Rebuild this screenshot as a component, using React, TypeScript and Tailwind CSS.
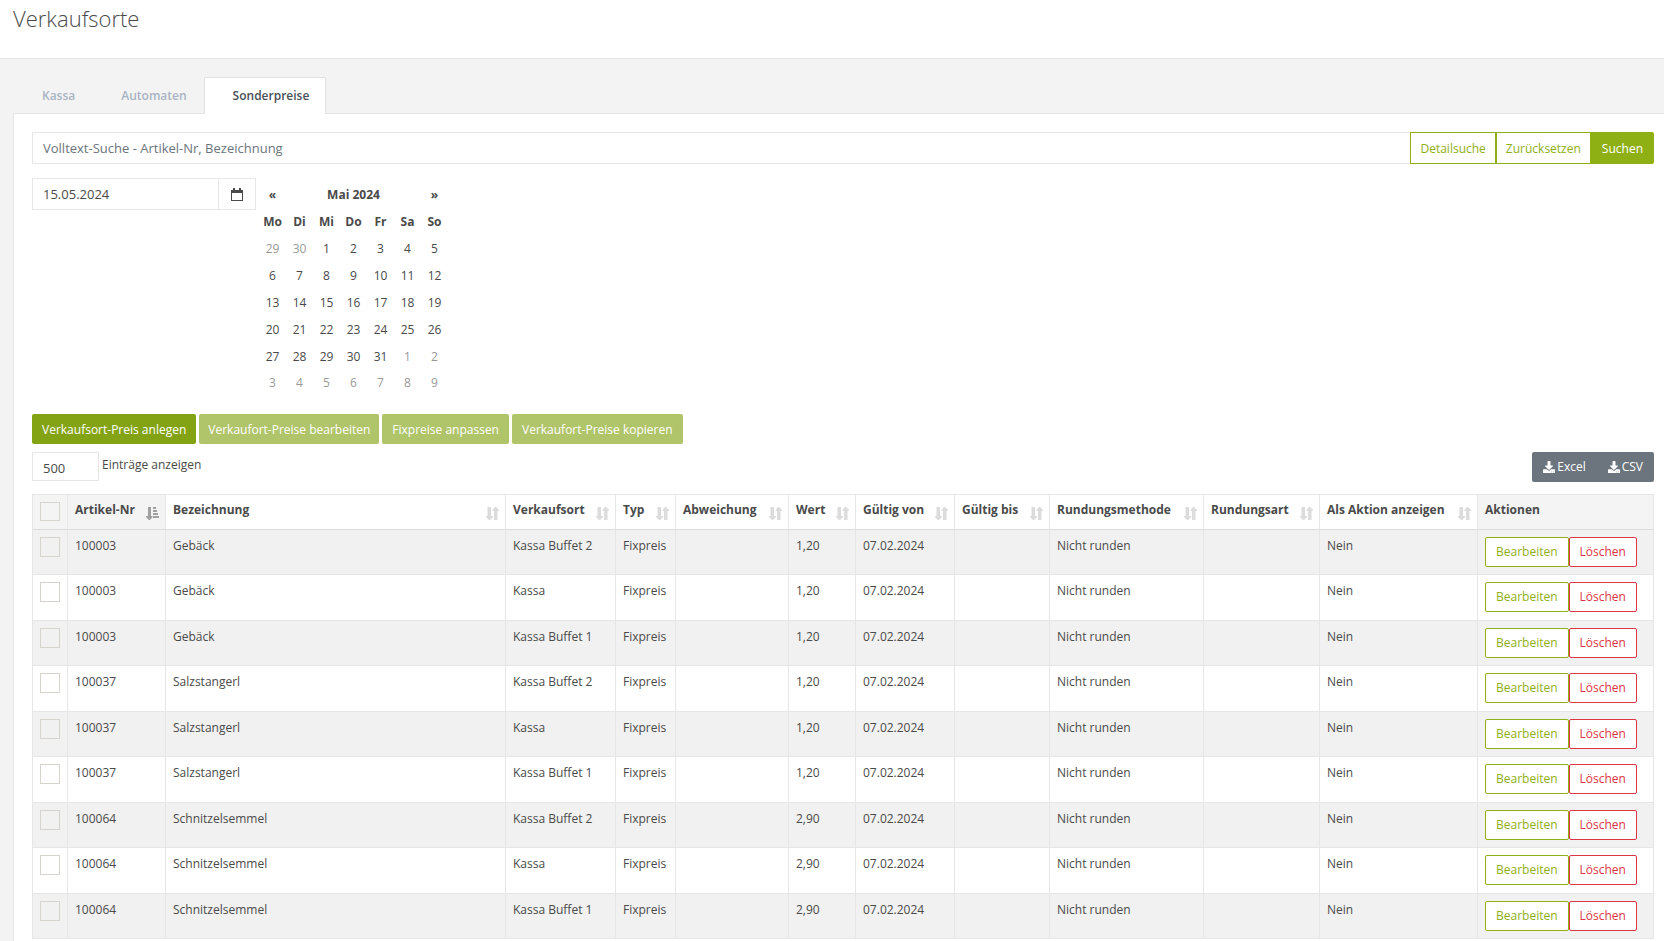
import React from 'react';
import { FaDownload } from 'react-icons/fa';

const weekDays = ['Mo', 'Di', 'Mi', 'Do', 'Fr', 'Sa', 'So'];

// 29 April 2024 is the first visible day
const weeks = [
  [29, 30, 1, 2, 3, 4, 5],
  [6, 7, 8, 9, 10, 11, 12],
  [13, 14, 15, 16, 17, 18, 19],
  [20, 21, 22, 23, 24, 25, 26],
  [27, 28, 29, 30, 31, 1, 2],
  [3, 4, 5, 6, 7, 8, 9],
];

const isOtherMonth = (week: number, day: number) =>
  (week === 0 && day > 20) || (week === 4 && day < 10) || week === 5;

const columns = [
  { label: 'Bezeichnung', width: '' },
  { label: 'Verkaufsort', width: 'w-[110px]' },
  { label: 'Typ', width: 'w-[60px]' },
  { label: 'Abweichung', width: 'w-[113px]' },
  { label: 'Wert', width: 'w-[67px]' },
  { label: 'Gültig von', width: 'w-[99px]' },
  { label: 'Gültig bis', width: 'w-[95px]' },
  { label: 'Rundungsmethode', width: 'w-[154px]' },
  { label: 'Rundungsart', width: 'w-[116px]' },
  { label: 'Als Aktion anzeigen', width: 'w-[158px]' },
];

const articles = [
  { nr: '100003', name: 'Gebäck', price: '1,20' },
  { nr: '100037', name: 'Salzstangerl', price: '1,20' },
  { nr: '100064', name: 'Schnitzelsemmel', price: '2,90' },
];

const places = ['Kassa Buffet 2', 'Kassa', 'Kassa Buffet 1'];

const rows = articles.flatMap((article) => places.map((place) => ({ ...article, place })));

const SortIcon: React.FC = () => (
  <svg viewBox="0 0 13 13" className="absolute right-[6px] bottom-[9px] w-[13px] h-[13px] fill-[#dcdcdc]" aria-hidden="true">
    <path d="M1.500 0H5v9h2v1l-3 3H3l-3-3V9h1.500z" />
    <path d="M8 13h3.500V4H13V3l-3-3H9L6.500 3v1H8z" />
  </svg>
);

const SortAscIcon: React.FC = () => (
  <svg viewBox="0 0 13 13" className="absolute right-[6px] bottom-[9px] w-[13px] h-[13px] fill-[#a0a0a0]" aria-hidden="true">
    <path d="M2 0h3v9h1.500v1l-2.500 3H3l-3-3V9h2z" />
    <path d="M7 0h3v2H7zM7 3h4v2H7zM7 6h5v2H7zM7 9h6v2H7z" />
  </svg>
);

const CalendarIcon: React.FC = () => (
  <svg viewBox="0 0 12 13" className="w-3 h-[13px]" aria-hidden="true">
    <path d="M0 2h12v11H0zM1 5v7h10V5z" fill="#4a4a4a" fillRule="evenodd" />
    <path d="M2 0h2v3H2zM8 0h2v3H8z" fill="#4a4a4a" />
  </svg>
);

const Calendar: React.FC = () => (
  <table className="ml-[3px] mt-[3px] table-fixed w-[189px] text-center">
    <thead>
      <tr className="h-[27px]">
        <th><button type="button" className="font-bold" aria-label="Vorheriger Monat">«</button></th>
        <th colSpan={5}>Mai 2024</th>
        <th><button type="button" className="font-bold" aria-label="Nächster Monat">»</button></th>
      </tr>
      <tr className="h-[27px]">
        {weekDays.map((day) => <th key={day}>{day}</th>)}
      </tr>
    </thead>
    <tbody>
      {weeks.map((week, i) => (
        <tr key={i} className="h-[27px] last:h-[26px]">
          {week.map((day) => (
            <td key={day} className={isOtherMonth(i, day) ? 'text-[#999]' : ''}>{day}</td>
          ))}
        </tr>
      ))}
    </tbody>
  </table>
);

const PriceTable: React.FC = () => (
  <table className="mt-3 w-full table-fixed border-separate border-spacing-0 border-l border-t border-[#e6e6e6] text-left">
    <thead>
      <tr className="h-[35px] [&>th]:border-r [&>th]:border-b [&>th]:border-r-[#e6e6e6] [&>th]:border-b-[#dcdcdc] [&>th]:align-top [&>th]:px-[7px] [&>th]:pt-[6px]">
        <th className="w-[35px] bg-[#f4f4f4]">
          <input type="checkbox" aria-label="Alle auswählen" className="block mt-px appearance-none w-5 h-[19px] border border-[#d6d4cc]" />
        </th>
        <th className="relative w-[98px] bg-[#f4f4f4]">Artikel-Nr<SortAscIcon /></th>
        {columns.map((column) => (
          <th key={column.label} className={`relative ${column.width}`}>
            {column.label}
            <SortIcon />
          </th>
        ))}
        <th className="w-[176px] bg-[#f4f4f4]">Aktionen</th>
      </tr>
    </thead>
    <tbody>
      {rows.map((row) => (
        <tr
          key={row.nr + row.place}
          className="h-[46px] odd:h-[45px] odd:bg-[#f1f1f1] [&>td]:border-r [&>td]:border-b [&>td]:border-[#e6e6e6] [&>td]:align-top [&>td]:px-[7px] [&>td]:pt-[7px]"
        >
          <td>
            <input type="checkbox" aria-label={`${row.name} ${row.place} auswählen`} className="block appearance-none w-5 h-5 border border-[#d6d4cc]" />
          </td>
          <td>{row.nr}</td>
          <td>{row.name}</td>
          <td>{row.place}</td>
          <td>Fixpreis</td>
          <td></td>
          <td>{row.price}</td>
          <td>07.02.2024</td>
          <td></td>
          <td>Nicht runden</td>
          <td></td>
          <td>Nein</td>
          <td>
            <div className="flex">
              <button type="button" className="h-[30px] px-[10px] rounded-xs border border-[#8fb015] bg-white text-[#8fb015]">Bearbeiten</button>
              <button type="button" className="h-[30px] px-[10px] rounded-xs border border-[#dc3545] bg-white text-[#dc3545]">Löschen</button>
            </div>
          </td>
        </tr>
      ))}
    </tbody>
  </table>
);

const App: React.FC = () => {
  return (
    <div className="min-h-screen flex flex-col bg-[#f3f3f3] font-['Open_Sans',sans-serif] text-xs leading-[18px] text-[#4a4a4a]">
      <header className="h-[59px] px-[13px] pt-[3px] bg-white border-b border-[#e6e6e6]">
        <h1 className="text-[22px] leading-[30px] font-light">Verkaufsorte</h1>
      </header>

      <main className="flex-1 flex flex-col pl-[13px] pt-[18px]">
        <nav className="relative z-10 flex -mb-px font-semibold text-[#a9b3c4]">
          <a href="#kassa" className="h-[37px] pl-[29px] pr-[17px] leading-[38px]">Kassa</a>
          <a href="#automaten" className="h-[37px] pl-[29px] pr-[17px] leading-[38px]">Automaten</a>
          <a href="#sonderpreise" className="h-[37px] pl-[28px] pr-[16px] leading-[36px] rounded-t-xs border border-b-0 border-[#dfe1e3] bg-white text-[#495057]">Sonderpreise</a>
        </nav>

        <section className="flex-1 border-l border-t border-[#e6e6e6] bg-white pl-[18px] pr-[10px] pt-[18px]">
          <form className="flex h-8">
            <input
              type="text"
              aria-label="Volltext-Suche"
              placeholder="Volltext-Suche - Artikel-Nr, Bezeichnung"
              className="flex-1 min-w-0 px-[10px] border border-r-0 border-[#e6e6e6] text-[13px] placeholder:text-[#6c757d]"
            />
            <button type="button" className="px-[9px] pt-px border border-[#8fb015] text-[#8fb015]">Detailsuche</button>
            <button type="button" className="px-[9px] pt-px border border-[#8fb015] text-[#8fb015]">Zurücksetzen</button>
            <button type="button" className="px-[11px] pt-px rounded-r-xs bg-[#8fb015] text-white">Suchen</button>
          </form>

          <div className="mt-[14px] flex items-start">
            <div className="flex h-8 w-56 border border-[#e6e6e6]">
              <input type="text" aria-label="Datum" defaultValue="15.05.2024" className="flex-1 min-w-0 px-[10px] text-[13px]" />
              <button type="button" aria-label="Kalender öffnen" className="w-[37px] flex items-center justify-center border-l border-[#e6e6e6]">
                <CalendarIcon />
              </button>
            </div>
            <Calendar />
          </div>

          <div className="mt-[18px] flex gap-[3px] text-white">
            <button type="button" className="h-[30px] px-[10px] pt-px rounded-xs bg-[#84a314]">Verkaufsort-Preis anlegen</button>
            <button type="button" className="h-[30px] px-[9px] pt-px rounded-xs bg-[#b0c46a]">Verkaufort-Preise bearbeiten</button>
            <button type="button" className="h-[30px] px-[10px] pt-px rounded-xs bg-[#b0c46a]">Fixpreise anpassen</button>
            <button type="button" className="h-[30px] px-[10px] pt-px rounded-xs bg-[#b0c46a]">Verkaufort-Preise kopieren</button>
          </div>

          <div className="mt-2 flex items-start justify-between">
            <label className="flex gap-[3px] leading-[26px]">
              <input type="text" defaultValue="500" className="w-[67px] h-[29px] px-[10px] pt-[2px] border border-[#e6e6e6] text-[13px]" />
              Einträge anzeigen
            </label>
            <div className="flex h-[30px] rounded-xs bg-[#6c757d] text-white">
              <button type="button" className="flex items-center gap-[2px] px-[11px]"><FaDownload size={12} />Excel</button>
              <button type="button" className="flex items-center gap-[2px] px-[11px]"><FaDownload size={12} />CSV</button>
            </div>
          </div>

          <PriceTable />
        </section>
      </main>
    </div>
  );
};

export default App;
